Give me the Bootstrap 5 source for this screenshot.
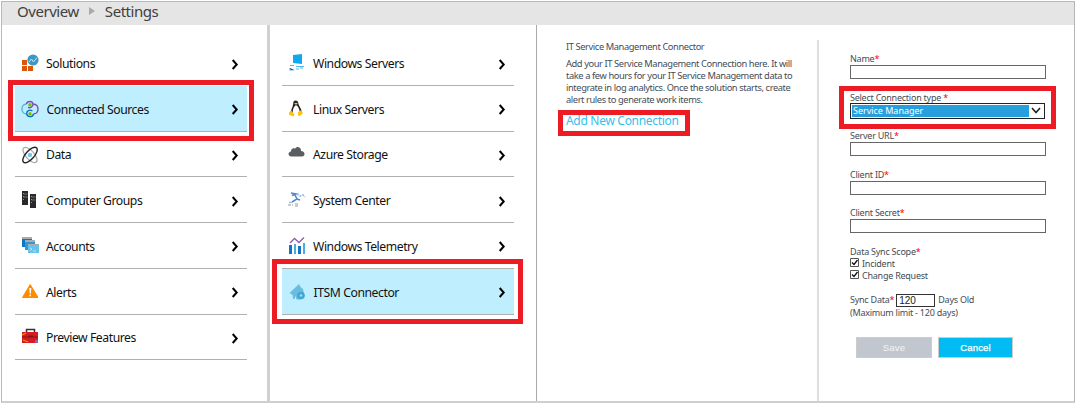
<!DOCTYPE html>
<html lang="en">
<head>
<meta charset="utf-8">
<title>Settings</title>
<link rel="stylesheet" href="https://cdn.jsdelivr.net/npm/bootstrap@5.3.0/dist/css/bootstrap.min.css">
<style>
body{font-family:"Noto Sans","Open Sans",sans-serif;background:#fff;color:#111;overflow:hidden}
.frame{width:1074px;height:403px;margin-left:1px;padding-top:1px}
.shell{border:1px solid #b9b9b9;border-bottom:2px solid #cfcfcf;border-right-color:#b5b5b5}
.topbar{height:23px;background:#e5e5e5;font-size:15px;letter-spacing:-.45px;padding-left:15px;color:#404040;line-height:18px}
.tri{width:0;height:0;border:4.5px solid transparent;border-left:6px solid #a9a9a9;border-right:0;margin:5px 10px 0 10px}
.pane1{width:268px;border-right:3px solid #d0d0d0;padding:15.4px 20px 0 13px}
.pane2{width:267px;border-right:1px solid #aaa;padding:15.4px 22px 0 12px}
.pane3{width:280px;padding:16px 0 0 29px;color:#444c55;font-size:9.3px;line-height:12px;letter-spacing:-.4px}
.pane4{flex:1;margin-top:15px;border-left:2px solid #dedede;padding:13px 0 0 31px;color:#444c55;font-size:9px;line-height:12px;letter-spacing:-.24px}
.entry{height:45.7px;border-bottom:1px solid #b0b0b0;font-size:12.2px;letter-spacing:-.44px;padding:3px 6px 0 6px}
.entry .ico{width:18px;height:18px;margin-right:7px;flex:none;margin-top:-2px}
.entry .arrow{width:8px;height:11px;margin-left:auto;margin-right:2px}
.chosen{background:#bfefff}
.chosen span{margin-left:.6px}
.first-row{border-color:transparent}
.ring{position:absolute;border:5px solid #ed1c24;pointer-events:none}
.para{margin-top:5px}
.addwrap{margin-top:7px}
.addlink{color:#35c0ec;font-size:12px;line-height:16px;letter-spacing:-.3px;text-decoration:none}
.req{color:#f00}
.field{height:38.6px}
.box{display:block;width:196px;height:14px;border:1px solid #666;background:#fff}
.combo{width:195px;height:16px;border:1px solid #222;padding:1px;line-height:12px;margin-top:-1px}
.combo span{background:#279fdc;color:#fff;flex:1;padding-left:1px;letter-spacing:-.02px}
.tick{width:9px;height:9px;margin-right:3px}
.days{width:39px;height:13px;border:1px solid #333;padding-left:2px;font-size:10px;line-height:11px;color:#222;margin:0 3px 0 2px;font-family:"Liberation Sans",sans-serif;letter-spacing:0}
.acts{margin:18px 0 0 6px;gap:6px}
.act{height:21px;border-radius:0;padding:0;border:1px solid #ccc;font:9.6px/19px "Liberation Sans",sans-serif;color:#fff;letter-spacing:.1px}
.act.save{width:76px;background:#c2c7cf;color:#f4f4f4}
.act.cancel{width:75px;background:#00bcf2;-webkit-text-stroke:.25px #fff}
</style>
</head>
<body>
<svg class="d-none"><symbol id="chev" viewBox="0 0 8 11"><path d="M1.7 1 5.7 5.5 1.7 10" fill="none" stroke="#000" stroke-width="2"/></symbol></svg>
<div class="frame"><div class="shell h-100 d-flex flex-column">
<header class="topbar d-flex"><span class="ov">Overview</span><i class="tri"></i><span class="st">Settings</span></header>
<div class="d-flex flex-grow-1">
<nav class="pane1">
 <div class="entry first-row d-flex align-items-center"><svg class="ico" viewBox="0 0 18 18"><path fill="#d9580d" d="M1 6h5v5H1zM1 12h5v5H1zM7 12h5v5H7z"/><circle cx="12" cy="6" r="5.6" fill="#3999c6"/><path d="M8 8 10.500 5 12.500 8 16 3.500" fill="none" stroke="#c6e6f5"/></svg><span>Solutions</span><svg class="arrow"><use href="#chev"/></svg></div>
 <div class="entry chosen d-flex align-items-center position-relative"><svg class="ico" viewBox="0 0 18 18"><g fill="none" stroke-width="1.400"><path d="M5.500 4.200C2.500 4 1 6 1 9s1.500 5 4.500 4.800" stroke="#58b6dc"/><path d="M5.500 4.200C6 .8 11.500.5 12 4.200 12.200 6.800 9 8.500 7 7.200" stroke="#7a51ad"/><path d="M12 4.200C15.500 4 17 6 17 9s-1.500 5-4.500 4.800" stroke="#7a51ad"/><path d="M11.500 11C8.500 9 5.500 11 5.700 13.800 6 17.500 12 17.500 12.500 13.800" stroke="#0072c6"/></g><circle cx="9" cy="4.800" r="1.700" fill="#7fba00"/><circle cx="9" cy="13.700" r="1.700" fill="#7fba00"/></svg><span>Connected Sources</span><svg class="arrow"><use href="#chev"/></svg><div class="ring" style="left:-7px;top:-6px;width:246px;height:61px"></div></div>
 <div class="entry d-flex align-items-center"><svg class="ico" viewBox="0 0 18 18"><g fill="none"><ellipse cx="9" cy="9" rx="4.200" ry="9.500" transform="rotate(-42 9 9)" stroke="#aaa" stroke-width="1.300"/><ellipse cx="9" cy="9" rx="4.200" ry="9.700" transform="rotate(42 9 9)" stroke="#222" stroke-width="1.400"/></g><circle cx="9" cy="9" r="2.200" fill="#75c6ed"/></svg><span>Data</span><svg class="arrow"><use href="#chev"/></svg></div>
 <div class="entry d-flex align-items-center"><svg class="ico" viewBox="0 0 18 18"><path fill="#292929" d="M1 0h6v14H1zM9 3h6v14H9z"/><path stroke="#777" d="M2.500 3h4M2.500 6h4M10.500 6h4M10.500 9h4"/><path fill="#7fba00" d="M2 2h1v1H2zM2 5h1v1H2zM2 8h1v1H2zM10 5h1v1h-1zM10 8h1v1h-1zM10 11h1v1h-1z"/></svg><span>Computer Groups</span><svg class="arrow"><use href="#chev"/></svg></div>
 <div class="entry d-flex align-items-center"><svg class="ico" viewBox="0 0 18 18"><path fill="#1274c4" d="M1 1h10v9H1z"/><path fill="#3496d2" d="M4 4h10v9H4z"/><path fill="#67c2ea" d="M7 8h11v8H7z"/><path fill="#a8adb2" d="M1 0h10v2H1zM4 3h10v2H4zM7 7h11v2H7z"/><path d="m9 11 2 1-2 2m3 0h3" fill="none" stroke="#b6e7fa"/></svg><span>Accounts</span><svg class="arrow"><use href="#chev"/></svg></div>
 <div class="entry d-flex align-items-center"><svg class="ico" viewBox="0 0 18 18"><path fill="#ff8c00" stroke="#ff8c00" stroke-linejoin="round" d="M9.200 1.500 17 14.500H1.500z"/><path fill="#fff" d="M8.300 5h2l-.4 5.500H8.700zM8.400 11.600H10v1.600H8.400z"/></svg><span>Alerts</span><svg class="arrow"><use href="#chev"/></svg></div>
 <div class="entry d-flex align-items-center"><svg class="ico" viewBox="0 0 18 18"><path d="M5.500 5V1.500h8V5" fill="none" stroke="#333" stroke-width="1.500"/><path fill="#d21e23" d="M1 4h16v11H1z"/><path fill="#8e1014" d="M1 8.500h16v1H1zM7 7.500h5v2H7z"/><path stroke="#ff8c00" stroke-width="1.200" d="m1 7 4-2M2 12l5 2"/><path fill="#8567b5" d="M14 12h3v3h-3z"/></svg><span>Preview Features</span><svg class="arrow"><use href="#chev"/></svg></div>
</nav>
<nav class="pane2">
 <div class="entry d-flex align-items-center"><svg class="ico" viewBox="0 0 18 18"><path fill="#10a8ef" d="M5 1 14 0v10L5 9z"/><path stroke="#4ab8ef" stroke-width="1.200" d="M2 11.500h4m2 1h8M2 14v2h4m2-1h3m1-1h3"/></svg><span>Windows Servers</span><svg class="arrow"><use href="#chev"/></svg></div>
 <div class="entry d-flex align-items-center"><svg class="ico" viewBox="0 0 18 18"><path fill="#20242b" d="M5.300 3C5-.4 10.300-.5 10.300 3c0 3 3.700 5.500 3.300 10H3C2.500 9 5.300 7 5.300 3z"/><path fill="#fff" d="M7.200 5.500C5 8 4.200 11 5 15H11.500C12.500 11 10.500 7.500 9 5.500z"/><path fill="#ffc20e" d="m6 3.500 2-.8 2 .8-2 1.300zM3 10.300l3.600 4.500-1.200 1.700L1 14.800v-2.200zM13 10.300l2 3-3.500 3-1.500-1v-3z"/></svg><span>Linux Servers</span><svg class="arrow"><use href="#chev"/></svg></div>
 <div class="entry d-flex align-items-center"><svg class="ico" viewBox="0 0 18 18"><path fill="#5b5e61" d="M3.500 10.500C0 10.500-.6 6 3 5.500 3 2 6 2 7 2.800 9-.5 13.500 1.500 13 5c4.500 0 4.500 5.500 1 5.500z"/></svg><span>Azure Storage</span><svg class="arrow"><use href="#chev"/></svg></div>
 <div class="entry d-flex align-items-center"><svg class="ico" viewBox="0 0 18 18"><g fill="none" stroke-width="1.600"><path stroke="#5089cf" d="m3 2 5 1-4 1.500M7 4l2 4-5 3M9 8l3 1"/><path stroke="#92b8e4" stroke-dasharray="2 1" d="m9 3 3 2 3-1 2 2"/><path stroke="#b5bcc5" stroke-dasharray="3 1" d="M1 11.500h4M0 14h5m2-1h4m-4 2h4"/></g></svg><span>System Center</span><svg class="arrow"><use href="#chev"/></svg></div>
 <div class="entry d-flex align-items-center"><svg class="ico" viewBox="0 0 18 18"><path fill="#1274c4" d="M1 8h3v9H1zM10 9h3v8h-3z"/><path fill="#4badde" d="M6 7h2v10H6zM15 6h2v11h-2z"/><path d="m2 6 4.500-4.500L11 5.500l5-5" fill="none" stroke="#9061ad" stroke-width="1.400"/></svg><span>Windows Telemetry</span><svg class="arrow"><use href="#chev"/></svg></div>
 <div class="entry chosen d-flex align-items-center position-relative"><svg class="ico" viewBox="0 0 18 18"><path fill="#68bee0" d="M1.500 10 11 1l1.500 3L15 6l1.500 7-4 3.500H8.500L7.500 13l-1 3H5l-.5-4z"/><circle cx="13" cy="12.500" r="3.800" fill="#46a6d2"/><circle cx="13" cy="12.500" r="1.200" fill="#a9e0f4"/></svg><span>ITSM Connector</span><svg class="arrow"><use href="#chev"/></svg><div class="ring" style="left:-10px;top:-10px;width:251px;height:65px"></div></div>
</nav>
<section class="pane3">
 <div class="ttl">IT Service Management Connector</div>
 <div class="text-nowrap para"><span>Add your IT Service Management Connection here. It will</span><br><span>take a few hours for your IT Service Management data to</span><br><span>integrate in log analytics. Once the solution starts, create</span><br><span>alert rules to generate work items.</span></div>
 <div class="position-relative d-inline-block addwrap"><a class="addlink" href="#">Add New Connection</a><div class="ring" style="left:-8px;top:-3px;width:132px;height:26px"></div></div>
</section>
<section class="pane4">
 <div class="field"><div>Name<span class="req">*</span></div><div class="box"></div></div>
 <div class="field position-relative"><div>Select Connection type <span class="req">*</span></div><div class="combo d-flex"><span>Service Manager</span><svg width="14" height="12" viewBox="0 0 14 12"><path d="m3 3 4 4.500L11 3" fill="none" stroke="#222" stroke-width="1.600"/></svg></div><div class="ring" style="left:-11px;top:-6px;width:217px;height:43px"></div></div>
 <div class="field"><div>Server URL<span class="req">*</span></div><div class="box"></div></div>
 <div class="field"><div>Client ID<span class="req">*</span></div><div class="box"></div></div>
 <div class="field"><div>Client Secret<span class="req">*</span></div><div class="box"></div></div>
 <div>Data Sync Scope<span class="req">*</span></div>
 <div class="d-flex"><svg class="tick" viewBox="0 0 9 9"><path d="M.5.5h8v8h-8z" fill="#fff" stroke="#555"/><path d="m2 4.500 2 2 3.500-4.500" fill="none" stroke="#111" stroke-width="1.300"/></svg>Incident</div>
 <div class="d-flex"><svg class="tick" viewBox="0 0 9 9"><path d="M.5.5h8v8h-8z" fill="#fff" stroke="#555"/><path d="m2 4.500 2 2 3.500-4.500" fill="none" stroke="#111" stroke-width="1.300"/></svg>Change Request</div>
 <div class="d-flex mt-2 pt-1">Sync Data<span class="req">*</span><div class="days">120</div>Days Old</div>
 <div>(Maximum limit - 120 days)</div>
 <div class="d-flex acts"><button class="btn act save">Save</button><button class="btn act cancel">Cancel</button></div>
</section>
</div></div></div>
<script src="https://cdn.jsdelivr.net/npm/bootstrap@5.3.0/dist/js/bootstrap.bundle.min.js"></script>
</body>
</html>
